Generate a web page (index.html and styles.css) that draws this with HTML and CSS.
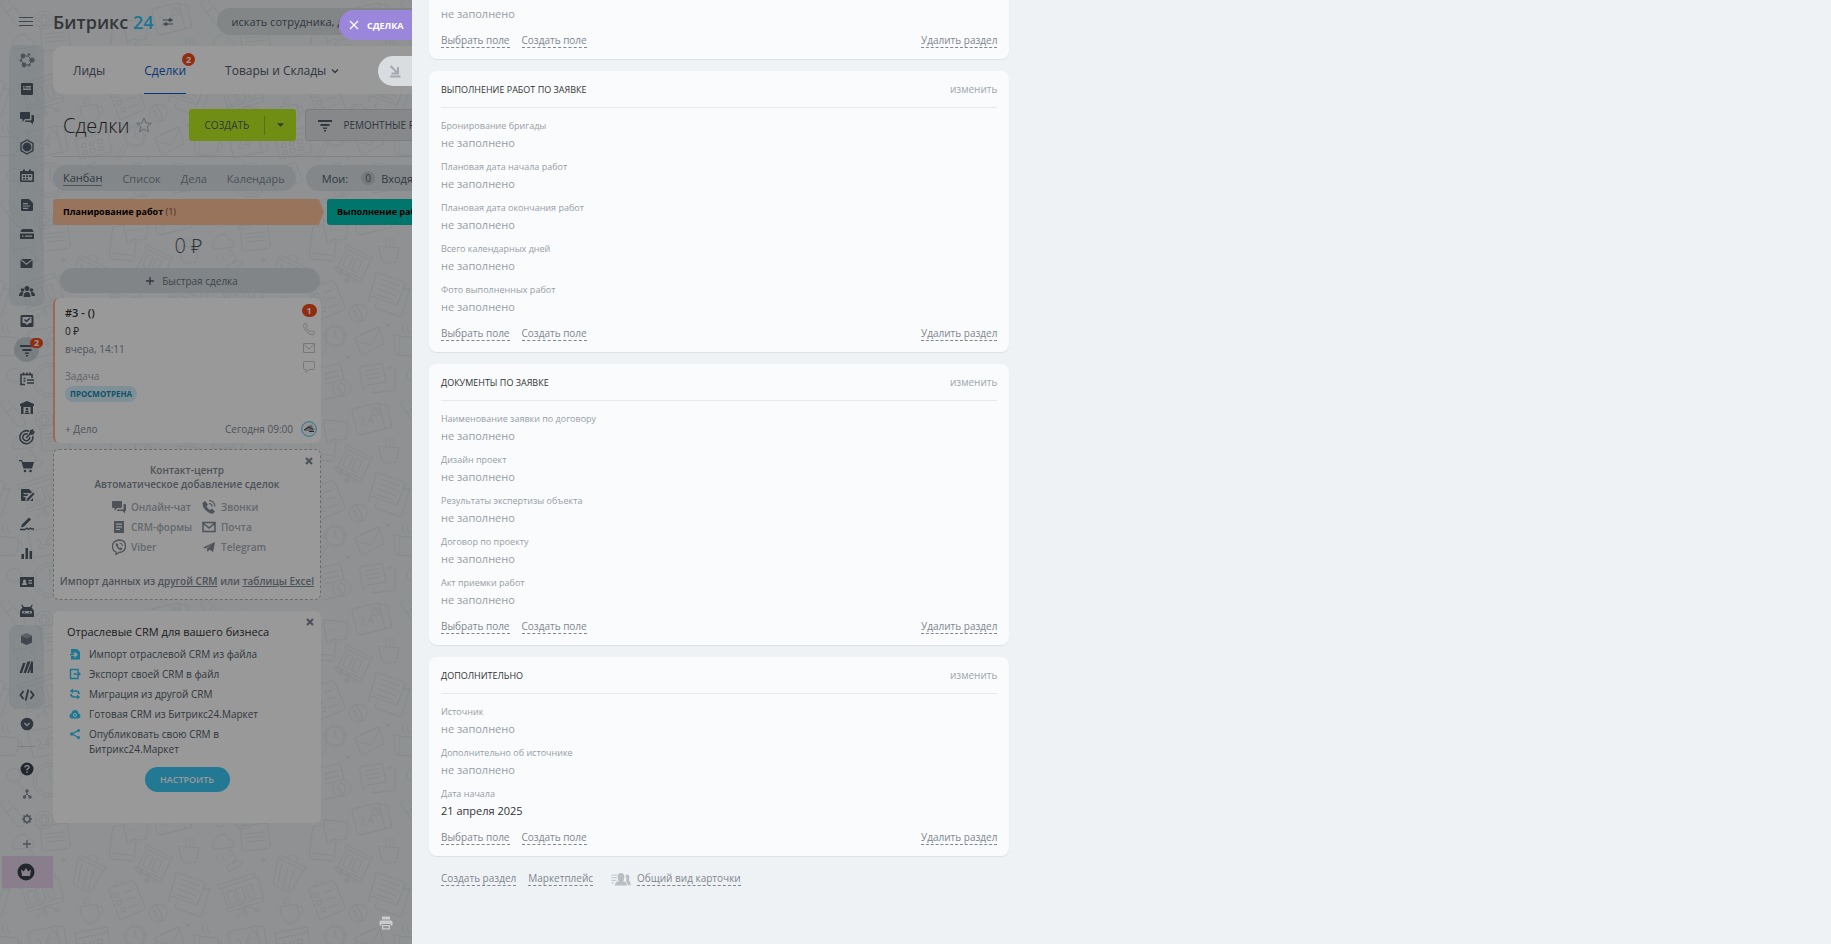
FILE: index.html
```html
<!DOCTYPE html>
<html lang="ru">
<head>
<meta charset="utf-8">
<title>Сделки</title>
<link rel="stylesheet" href="styles.css">
</head>
<body>
<svg class="defs" width="0" height="0" aria-hidden="true">
  <defs>
    <pattern id="doodle" width="200" height="200" patternUnits="userSpaceOnUse">
      <g fill="none" stroke="#e1e6e9" stroke-width="1" stroke-linejoin="round" stroke-linecap="round">
        <g id="cup"><path d="M179 46l20 2-3 14q-7 3-14-1zM199 51q5 0 4 4t-6 3M186 38q-2 2 0 4t0 3M190 38q-2 2 0 4t0 3M194 38q-2 2 0 4t0 3"/></g>
        <path d="M13 49q-1-12 9-15 5-1 7 5 6 2 5 8zM31 50l5 9-4 4M27 66l11-6 5 3-14 9zM16 56l3 5M21 54l3 5"/>
        <path d="M80 55l27 13-2 3-27-13zM78 60l-5 22q8 10 18 10l12-22M82 64l-4 19M88 67l-5 20M94 70l-6 20M88 57q4-5 9 0v3"/>
        <path d="M178 73l26 9q2 1 1 3l-8 20-26-9-3 6 3-10 5-18q0-2 2-1zM204 90l6-2-9 29-26-9 2-7M181 79l19 7M180 84l19 7M178 89l18 7M176 94l17 6"/>
        <path d="M-22 73l26 9q2 1 1 3l-8 20M4 90l6-2-9 29-26-9"/>
        <path d="M18 85l37-12 1 4-37 12zM22 89l6 19M58 77l5 20M26 109l37-12 1 4-36 11zM27 92l6-2 4 13-6 2zM36 89l6-2 4 13-6 2zM46 86l5-2 4 13-5 2zM46 106l-1 6M46 106l-6 9M46 106l9 3"/><circle cx="38" cy="116" r="2"/><circle cx="46" cy="114" r="2"/><circle cx="57" cy="110" r="2"/>
        <path d="M80 107l17-3 2 13q-6 8-12 6-6-4-7-16zM98 107q5-1 5 3t-4 4M83 98q-1 2 1 3t0 3M87 97q-1 2 1 3t0 3"/>
        <path d="M110 88l22-7q2 0 3 2l10 24q0 2-2 3l-20 9q-3 1-4-1l-10-27q-1-2 1-3zM115 86q0-6 6-4l3 2M114 94l4-1 1 4-4 1zM117 101l4-1 1 4-4 1zM121 108l4-1 1 4-4 1zM123 93l9-3M126 100l9-3M129 107l9-3"/>
        <circle cx="158" cy="113" r="9"/><path d="M154 106q2-2 4 1l4 9-1 5-4-4-4-9z"/>
        <path d="M147 45l26 13-2 3-26-13zM146 50l-9 18M170 62l-8 18M136 67l27 13-1 3-27-13zM148 54l5 3-5 12-5-3zM157 58l5 3-5 12-5-3zM149 75l-6-1M149 75l-1 6M149 75l5 5"/><circle cx="140" cy="73" r="2"/><circle cx="147" cy="81" r="2"/><circle cx="155" cy="81" r="2"/>
        <path d="M124 20l22 2q2 0 2 2l-2 15q-10 2-12 0l-6 4-2-5q-3-15-2-18zM123 25l-10 2-4 30q1 2 4 2l18 2q3 0 3-2l2-17M112 53l22 3M130 30h1M135 30h1M140 30h1"/>
        <path d="M152 9l27-6 6 26-27 6zM179 4l8 1 5 22-7 2"/><circle cx="176" cy="12" r="4"/><path d="M176 10v2h2M159 19q3-4 5 0l-3 7 5-1M172 24v-9l-4 7 6-1"/>
        <path d="M40 26l27-3 3 22q0 4-4 4l-23 2zM45 34l20-2M45 38l20-2M46 42l20-2"/><circle cx="44" cy="20" r="9"/><path d="M42 15h4v3h3v4h-3v3h-4v-3h-3v-4h3z"/>
        <circle cx="135" cy="136" r="11"/><circle cx="135" cy="136" r="9"/><path d="M135 130v6l4 3M125 144l-10 14M128 146l-9 13"/>
        <path d="M155 138l24-11 5 17-22 11zM159 142l12 3 8-14M160 135l15-7"/>
        <path d="M160 167l22-4 4 19-19 3-4 5-1-5zM188 168l7 0v22l-22 3 1-6M165 171l14-2M165 175l15-2M166 179l14-2"/>
        <path d="M120 168l20-5 4 17M124 174l14-3M124 179l14-3M125 184l10-2M124 200l20-5"/><circle cx="142" cy="188" r="9"/><path d="M141 182l5 5-2 1 1 5-4 1-1-5h-3z"/>
        <path d="M194 135l6 1v20l-4-2zM0 136l18 2q1 12-4 18l-14-1M18 142q6 0 4 5t-6 4M3 125q-2 3 0 5t0 4M8 125q-2 3 0 5t0 4"/>
        <path d="M28 132l28-6 6 26-28 6zM56 126l8 1 4 23-6 3M36 142q3-4 5 0l-3 7 5-1M48 147v-9l-4 7 6-1"/><circle cx="53" cy="135" r="4"/>
        <path d="M75 133l32-6 5 25-32 7zM76 139l32-7M82 144l4-1v4l-4 1zM90 142l4-1v4l-4 1zM98 140l4-1v4l-4 1zM83 151l4-1v4l-4 1zM91 149l4-1v4l-4 1zM99 147l4-1v4l-4 1z"/>
        <circle cx="50" cy="180" r="17"/><circle cx="50" cy="180" r="14"/><path d="M50 169v11l7 6"/>
        <path d="M3 0q-4 4 0 8l14 18q8 3 8-6L9 1Q6-3 3 0zM7 13l8-8"/><circle cx="14" cy="175" r="7"/><path d="M18 181l5 9"/>
        <path d="M73 170l22-8 8 19-22 8zM80 172l14-5M82 177l14-5M63 57v6M60 60h6M188 123v4M186 125h4M148 155v4M146 157h4"/>
      </g>
    </pattern>
    <symbol id="i-net" viewBox="0 0 16 16"><g fill="currentColor"><circle cx="4" cy="4" r="2.4"/><circle cx="13" cy="8" r="2.6"/><circle cx="5" cy="13" r="2.4"/><circle cx="10" cy="2.5" r="1.3"/><circle cx="1.8" cy="8.5" r="1.2"/><circle cx="10.3" cy="13.3" r="1.2"/></g><path d="M4 4h5l4 4-3 5H5L2 8z" fill="none" stroke="currentColor" stroke-width="1"/></symbol>
    <symbol id="i-feed" viewBox="0 0 16 16"><path fill="currentColor" fill-rule="evenodd" d="M3 2h10q1 0 1 1v10q0 1-1 1H3q-1 0-1-1V3q0-1 1-1zm1 3v1.500h1.500V5zm2.500 0v1.500H12V5zM4 7.500V9h8V7.500z"/></symbol>
    <symbol id="i-chat" viewBox="0 0 16 16"><path fill="currentColor" d="M2 2h8q1 0 1 1v5q0 1-1 1H6l-2.500 3V9H2Q1 9 1 8V3q0-1 1-1zm10.500 3H14q1 0 1 1v5q0 1-1 1v2.500L11.500 12H7q-1 0-1-1v-.5h5.500q1 0 1-1z"/></symbol>
    <symbol id="i-hex" viewBox="0 0 16 16"><path fill="none" stroke="currentColor" stroke-width="1.400" stroke-linejoin="round" d="M8 1l6 3.400v7.200L8 15l-6-3.400V4.400z"/><circle cx="8" cy="8" r="4.400" fill="currentColor"/></symbol>
    <symbol id="i-cal" viewBox="0 0 16 16"><path fill="currentColor" fill-rule="evenodd" d="M2 3h2V1.500h2V3h4V1.500h2V3h2q1 0 1 1v9q0 1-1 1H2q-1 0-1-1V4q0-1 1-1zm.7 3v6.500h10.600V6z"/><path fill="currentColor" d="M4 7.300h2V9H4zm3 0h2V9H7zm3 0h2V9h-2zM4 10h2v1.500H4zm3 0h2v1.500H7z"/></symbol>
    <symbol id="i-doc" viewBox="0 0 16 16"><path fill="currentColor" fill-rule="evenodd" d="M3 2h7l4 4v7q0 1-1 1H3q-1 0-1-1V3q0-1 1-1zm1 4v1.200h5V6zm0 2.400v1.200h7V8.400zm0 2.400V12h5v-1.200z"/></symbol>
    <symbol id="i-form" viewBox="0 0 16 16"><path fill="currentColor" fill-rule="evenodd" d="M3 2h10v12H3zm2 2.500v1.200h6V4.500zm0 2.700v1.200h6V7.200zm0 2.700v1.200h4V9.900z"/></symbol>
    <symbol id="i-disk" viewBox="0 0 16 16"><path fill="currentColor" fill-rule="evenodd" d="M4 3h8q2 0 2.500 3h-13Q2 3 4 3zM1 7.500h14v5q0 .5-.5.500h-13Q1 13 1 12.500zm2 2v1.300h1.500V9.500zm3 0v1.300h7V9.500z"/></symbol>
    <symbol id="i-mail" viewBox="0 0 16 16"><path fill="currentColor" d="M2 4h11l-5.500 4.500zM1.500 5l6 5 6-5v7q0 1-1 1h-10q-1 0-1-1z"/></symbol>
    <symbol id="i-group" viewBox="0 0 16 16"><g fill="currentColor"><circle cx="8" cy="4.500" r="2.500"/><circle cx="3.500" cy="6" r="1.800"/><circle cx="12.500" cy="6" r="1.800"/><path d="M4.500 13q0-5 3.500-5t3.500 5zM0 12q0-4 3-4 1 0 1.500.5-1 1-1.200 3.500zM16 12q0-4-3-4-1 0-1.500.5 1 1 1.200 3.500z"/></g></symbol>
    <symbol id="i-task" viewBox="0 0 16 16"><path fill="currentColor" fill-rule="evenodd" d="M3 2h10q1.500 0 1.500 1.500v9.500q0 1-1.500 1H3q-1.500 0-1.500-1V3.500Q1.500 2 3 2zm.5 2v6h2.500l1 1.500h2l1-1.500h2.500V4z"/><path d="M5.500 6.500l2 2 3.500-3.500" fill="none" stroke="currentColor" stroke-width="1.500"/></symbol>
    <symbol id="i-funnel" viewBox="0 0 16 16"><path fill="currentColor" d="M1 3h14v2H1zm2.500 4h9v2h-9zM5.500 10.500h5l-1 1.500h-3zM7 13h2v1.500H7z"/></symbol>
    <symbol id="i-booking" viewBox="0 0 16 16"><path fill="none" stroke="currentColor" stroke-width="1.500" d="M6 13.500H2V3.500h11V7M4.500 1.500v3M8 1.500v3M11 1.500v3M4.500 7.500h2M4.500 10h2M8 9h7M8 12h7"/></symbol>
    <symbol id="i-house" viewBox="0 0 16 16"><path fill="currentColor" fill-rule="evenodd" d="M8 1l7 3v2h-1v8H2V6H1V4zM4.500 7v7h1v-1h5v1h1V7z"/><circle cx="8" cy="9" r="1.300" fill="currentColor"/><path fill="currentColor" d="M6 12.500q0-2 2-2t2 2z"/></symbol>
    <symbol id="i-target" viewBox="0 0 16 16"><path fill="none" stroke="currentColor" stroke-width="1.500" d="M10 2.200A6.500 6.500 0 1 0 13.800 7M9 5.200A3.500 3.500 0 1 0 10.800 8M7 9l6-6M11 5l.5-3 2-1v1.700L15 3l-1.200 2z"/></symbol>
    <symbol id="i-cart" viewBox="0 0 16 16"><path fill="currentColor" d="M0 2h3l.8 2H15l-2 6.500H4.500L2.300 3.300H0z"/><circle cx="6" cy="13" r="1.300" fill="currentColor"/><circle cx="11.500" cy="13" r="1.300" fill="currentColor"/></symbol>
    <symbol id="i-docpen" viewBox="0 0 16 16"><path fill="currentColor" d="M3 2h7l3 3-2 2V6H4.500v1.200h5L8 9H4.500v1.200H7L6.500 12l-.3 2H3q-1 0-1-1V3q0-1 1-1zm11 3.500l1.500 1.500-6 6.500-2.200.7.6-2.200zM11 14l3-3v3z"/></symbol>
    <symbol id="i-sign" viewBox="0 0 16 16"><path fill="currentColor" d="M10 1.500L12 3.500 5 10.500l-3 1 1-3z"/><path d="M1 13.500h5l2-1.500 1.500 1.500 2-1.500 1 1H15" fill="none" stroke="currentColor" stroke-width="1.300"/></symbol>
    <symbol id="i-bars" viewBox="0 0 16 16"><path fill="currentColor" d="M2.500 9H5v5H2.500zm4-6H9v11H6.500zm4 3H13v8h-2.500z"/></symbol>
    <symbol id="i-card" viewBox="0 0 16 16"><path fill="currentColor" fill-rule="evenodd" d="M1 3h14v10H1zm8.500 3v1.200H13V6zm0 2.500v1.200H13V8.500zM3 11h5q0-2-1.500-2.500Q7 8 7 7 7 5.500 5.500 5.500T4 7q0 1 .5 1.500Q3 9 3 11z"/></symbol>
    <symbol id="i-robot" viewBox="0 0 16 16"><path fill="currentColor" fill-rule="evenodd" d="M3 1.500L5 4h6l2-2.500.8.5-1.300 2.500q2.500 2 2.500 5v4q0 .5-1 .5H2q-1 0-1-.5v-4q0-3 2.500-5L2.200 2zM4 8q-1 0-1 1.200T4 10.500h8q1 0 1-1.300T12 8z"/><circle cx="5.500" cy="9.300" r=".8" fill="currentColor"/><circle cx="10.500" cy="9.300" r=".8" fill="currentColor"/></symbol>
    <symbol id="i-box" viewBox="0 0 16 16"><path fill="currentColor" opacity=".5" d="M7.500 2L13 4.500v7L7.500 14 2 11.500v-7z"/><path fill="currentColor" opacity=".6" d="M2 5l5.500 2.500V14L2 11.500zM7.500 7.500L13 5v6.500L7.500 14z"/></symbol>
    <symbol id="i-slashes" viewBox="0 0 16 16"><path fill="currentColor" d="M4 4h2.500L3 14H.5zM8.500 2.500h3L7 14H4.500zM12.500 2L14 3v11h-2.500V9.500L10 14H8.200z"/></symbol>
    <symbol id="i-code" viewBox="0 0 16 16"><path fill="none" stroke="currentColor" stroke-width="1.800" d="M4.500 4L1.500 8l3 4M11.500 4l3 4-3 4M9.300 2.500l-2.600 11"/></symbol>
    <symbol id="i-down" viewBox="0 0 16 16"><circle cx="8" cy="8" r="6.300" fill="currentColor"/><path d="M5.300 7L8 9.500 10.700 7" fill="none" stroke="#d9dde0" stroke-width="1.500"/></symbol>
    <symbol id="i-help" viewBox="0 0 16 16"><circle cx="8" cy="8" r="6.500" fill="currentColor"/><path d="M6 6.500Q6 4.500 8 4.500t2 1.800Q10 7.500 8 8.500v.8M8 10.500V12" fill="none" stroke="#d9dde0" stroke-width="1.500"/></symbol>
    <symbol id="i-tree" viewBox="0 0 16 16"><path d="M8 5v3l-3 3M8 8l3 3" fill="none" stroke="currentColor"/><circle cx="8" cy="5" r="1.700" fill="currentColor"/><circle cx="5.500" cy="11" r="1.700" fill="currentColor"/><circle cx="11" cy="11" r="1.700" fill="currentColor"/></symbol>
    <symbol id="i-gear" viewBox="0 0 16 16"><circle cx="8" cy="8" r="3" fill="none" stroke="currentColor" stroke-width="1.600"/><path d="M8 3v2M8 11v2M3 8h2M11 8h2M4.500 4.500l1.300 1.300M10.200 10.200l1.300 1.300M4.500 11.500l1.300-1.300M10.200 5.800l1.300-1.300" stroke="currentColor" stroke-width="1.500"/></symbol>
    <symbol id="i-plus" viewBox="0 0 16 16"><path d="M8 4v8M4 8h8" stroke="currentColor" stroke-width="1.300"/></symbol>
    <symbol id="i-crown" viewBox="0 0 18 18"><circle cx="9" cy="9" r="8.500" fill="currentColor"/><path fill="#e3dbe8" d="M4 6.500l2.800 2L9 5l2.200 3.500 2.800-2-1 6.500H5z"/></symbol>
    <symbol id="i-x" viewBox="0 0 10 10"><path d="M2 2l6 6M8 2l-6 6" stroke="currentColor" stroke-width="2.200"/></symbol>
    <symbol id="i-phone" viewBox="0 0 14 14"><path fill="none" stroke="currentColor" d="M1.500 2.500l2-1.500 2 3-1.300 1.500q1 2.500 4 4.300L9.700 8.500l3 2-1.500 2.300q-3 .5-6.500-3T1.500 2.500z"/></symbol>
    <symbol id="i-env" viewBox="0 0 14 14"><path fill="none" stroke="currentColor" d="M1.500 2.500h11v9h-11zM1.500 3L7 8l5.500-5"/></symbol>
    <symbol id="i-envb" viewBox="0 0 16 16"><path fill="none" stroke="currentColor" stroke-width="1.500" d="M2 3.500h12v9H2zM2 4l6 5 6-5"/></symbol>
    <symbol id="i-bubble" viewBox="0 0 14 14"><path fill="none" stroke="currentColor" d="M2.500 1.500h9q1 0 1 1v6q0 1-1 1H7l-3 3v-3H2.500q-1 0-1-1v-6q0-1 1-1z"/></symbol>
    <symbol id="i-call" viewBox="0 0 16 16"><path fill="currentColor" d="M1.500 4L4 2l3 3.500-1.500 2q1 2 3.500 3.500l2-1.500 3 3-2 2.300q-3 .5-7-3.300T1.500 4z"/><path fill="none" stroke="currentColor" stroke-width="1.200" d="M8 1.500q5.500.5 6 6M8 4.500q2.800.3 3.200 3"/></symbol>
    <symbol id="i-viber" viewBox="0 0 16 16"><path fill="none" stroke="currentColor" stroke-width="1.300" d="M8 1q6.500 0 6.500 6T8 13.500L5 15.500V13Q1.500 12 1.500 7T8 1z"/><path fill="currentColor" d="M4.500 5l1.300-1L7.500 6l-.8 1q.8 1.500 2 2l1-.7 1.800 1.500-1 1.300Q6.500 11.500 4.500 5z"/><path d="M8.500 4q3 0 3 3" fill="none" stroke="currentColor"/></symbol>
    <symbol id="i-plane" viewBox="0 0 16 16"><path fill="currentColor" d="M2 8.500L14 3l-2 10-3.500-2.500L6.500 13 6 9.500 11.500 5 4.500 9.500z"/></symbol>
    <symbol id="i-import" viewBox="0 0 12 12"><path fill="currentColor" fill-rule="evenodd" d="M2 1h6l3 3v7.500H2V8h3.500v2L9 6.500 5.500 3.500V5.500H2z"/><path fill="currentColor" d="M1 5.800h4v1.500H1z"/></symbol>
    <symbol id="i-export" viewBox="0 0 12 12"><path fill="none" stroke="currentColor" stroke-width="1.500" d="M9 3.500v-2H1.500v9H9V8.500M4.500 6H10M8.500 3.800L11 6 8.500 8.200"/></symbol>
    <symbol id="i-sync" viewBox="0 0 12 12"><path fill="none" stroke="currentColor" stroke-width="1.700" d="M3 3h4q3 0 3 3M9 9H5Q2 9 2 6"/><path fill="currentColor" d="M4 .5v5L.8 3zM8 11.500v-5L11.200 9z"/></symbol>
    <symbol id="i-cloud" viewBox="0 0 12 12"><path fill="currentColor" fill-rule="evenodd" d="M3 10.500Q.5 10.500.5 8T2.500 5.500Q3 2 6 2t3.500 3.500q2 .3 2 2.500T9 10.500zM6 5a2 2 0 1 0 .01 0z"/><circle cx="6" cy="7" r="1" fill="currentColor"/></symbol>
    <symbol id="i-share" viewBox="0 0 12 12"><path d="M9.500 2.500L3 6l6.500 3.500" fill="none" stroke="currentColor" stroke-width="1.400"/><g fill="currentColor"><circle cx="9.500" cy="2.500" r="1.600"/><circle cx="2.800" cy="6" r="1.800"/><circle cx="9.500" cy="9.500" r="1.600"/></g></symbol>
    <symbol id="i-print" viewBox="0 0 14 14"><path fill="currentColor" fill-rule="evenodd" d="M3 .5h8V3.500H3zM2 4.500h10q1.500 0 1.500 1.500v3.500h-2V8h-9v1.500H.5V6Q.5 4.500 2 4.500zM3 9h8v4.500H3zm1.300 1.200v2h5.400v-2z"/></symbol>
    <symbol id="i-people" viewBox="0 0 22 16"><path d="M0 3.500h7M0 6.500h6M0 9.500h6M0 12.500h3" stroke="currentColor"/><path fill="currentColor" d="M4 15.500q0-4 4.500-5Q7 8 7.200 5 7.500 1 11 1t3.800 4q.2 3-1.300 5.500 4.500 1 4.500 5zM16 4q1.500-2 3.500-.5t.5 6q2 1 2 5.500h-3q-.5-3-2.500-4.500Q18 8 16 4z"/></symbol>
  </defs>
</svg>

<div class="layout">
  <div class="page">
    <svg class="wallpaper" aria-hidden="true"><rect width="100%" height="100%" fill="url(#doodle)"/></svg>
    <nav class="side">
      <button class="burger" aria-label="Меню"><i></i><i></i><i></i></button>
      <div class="side-group">
        <a href="#"><svg class="ic faded"><use href="#i-net"/></svg></a>
        <a href="#"><svg class="ic"><use href="#i-feed"/></svg></a>
        <a href="#"><svg class="ic"><use href="#i-chat"/></svg></a>
        <a href="#"><svg class="ic"><use href="#i-hex"/></svg></a>
        <a href="#"><svg class="ic"><use href="#i-cal"/></svg></a>
        <a href="#"><svg class="ic"><use href="#i-doc"/></svg></a>
        <a href="#"><svg class="ic"><use href="#i-disk"/></svg></a>
        <a href="#"><svg class="ic"><use href="#i-mail"/></svg></a>
        <a href="#"><svg class="ic"><use href="#i-group"/></svg></a>
      </div>
      <div class="side-list">
        <a href="#"><svg class="ic"><use href="#i-task"/></svg></a>
        <a href="#" class="current"><svg class="ic"><use href="#i-funnel"/></svg><span class="side-badge">2</span></a>
        <a href="#"><svg class="ic"><use href="#i-booking"/></svg></a>
        <a href="#"><svg class="ic"><use href="#i-house"/></svg></a>
        <a href="#"><svg class="ic"><use href="#i-target"/></svg></a>
        <a href="#"><svg class="ic"><use href="#i-cart"/></svg></a>
        <a href="#"><svg class="ic"><use href="#i-docpen"/></svg></a>
        <a href="#"><svg class="ic"><use href="#i-sign"/></svg></a>
        <a href="#"><svg class="ic"><use href="#i-bars"/></svg></a>
        <a href="#"><svg class="ic"><use href="#i-card"/></svg></a>
        <a href="#"><svg class="ic"><use href="#i-robot"/></svg></a>
      </div>
      <div class="side-group lower">
        <a href="#"><svg class="ic"><use href="#i-box"/></svg></a>
        <a href="#"><svg class="ic"><use href="#i-slashes"/></svg></a>
        <a href="#"><svg class="ic"><use href="#i-code"/></svg></a>
      </div>
      <div class="side-list"><a href="#"><svg class="ic"><use href="#i-down"/></svg></a></div>
      <div class="side-tools">
        <a href="#"><svg class="ic dark"><use href="#i-help"/></svg></a>
        <a href="#"><svg class="ic faded"><use href="#i-tree"/></svg></a>
        <a href="#"><svg class="ic faded"><use href="#i-gear"/></svg></a>
        <a href="#"><svg class="ic faded"><use href="#i-plus"/></svg></a>
      </div>
      <a href="#" class="crown"><svg class="ic-crown"><use href="#i-crown"/></svg></a>
    </nav>

    <div class="main">
      <header class="top">
        <a class="logo" href="#">Битрикс <b>24</b></a>
        <svg class="sliders" viewBox="0 0 10 10"><path d="M0 3h10M0 7h10" stroke="currentColor"/><circle cx="7" cy="3" r="1.700" fill="currentColor"/><circle cx="3" cy="7" r="1.700" fill="currentColor"/></svg>
        <input class="search" type="text" aria-label="Поиск" placeholder="искать сотрудника, документ, прочее...">
      </header>
      <nav class="menu">
        <a href="#">Лиды</a>
        <a href="#" class="active">Сделки<span class="badge">2</span></a>
        <a href="#">Товары и Склады <svg class="chev" viewBox="0 0 8 8"><path d="M1 2.500l3 3 3-3" fill="none" stroke="currentColor" stroke-width="1.300"/></svg></a>
      </nav>
      <div class="toolbar">
        <h1>Сделки</h1>
        <svg class="star" viewBox="0 0 16 16"><path fill="none" stroke="currentColor" d="M8 1l2 5 5.300.3-4.100 3.400 1.400 5.200L8 12l-4.600 2.900 1.400-5.200L.7 6.300 6 6z"/></svg>
        <div class="create"><button>СОЗДАТЬ</button><button class="more" aria-label="Ещё"><svg viewBox="0 0 8 4"><path fill="currentColor" d="M0 0h8L4 4z"/></svg></button></div>
        <button class="funnel"><svg class="ic"><use href="#i-funnel"/></svg>РЕМОНТНЫЕ РАБОТЫ</button>
      </div>
      <div class="views">
        <div class="pill"><a href="#" class="on">Канбан</a><a href="#">Список</a><a href="#">Дела</a><a href="#">Календарь</a></div>
        <div class="pill mine"><span>Мои:</span><i class="zero">0</i><span>Входящие</span></div>
      </div>
      <div class="kanban">
        <section class="col">
          <div class="stage orange"><b>Планирование работ</b> (1)</div>
          <div class="sum">0 ₽</div>
          <button class="quick"><svg class="ic"><use href="#i-plus"/></svg>Быстрая сделка</button>
          <article class="deal">
            <div class="deal-body">
              <div>
                <a class="deal-title" href="#">#3 - ()</a>
                <div class="deal-sum">0 ₽</div>
                <div class="deal-date">вчера, 14:11</div>
                <div class="deal-task">Задача</div>
                <span class="seen">ПРОСМОТРЕНА</span>
              </div>
              <div class="deal-icons">
                <span class="count">1</span>
                <svg><use href="#i-phone"/></svg><svg><use href="#i-env"/></svg><svg><use href="#i-bubble"/></svg>
              </div>
            </div>
            <div class="deal-foot"><a href="#">+ Дело</a><span>Сегодня 09:00</span>
              <svg class="ava" viewBox="0 0 16 16"><circle cx="8" cy="8" r="7.400" fill="#f4f6f7" stroke="#4fc3e8"/><path d="M3 9q4-5 7-5 3 1 1 3l3 1-2 2H4z" fill="#a5adb3"/><path d="M3 9l5-3 4 2M8 10.500h5" stroke="#444" fill="none"/></svg>
            </div>
          </article>
          <article class="contact">
            <button class="close" aria-label="Закрыть"><svg><use href="#i-x"/></svg></button>
            <p>Контакт-центр<br>Автоматическое добавление сделок</p>
            <div class="channels">
              <span><svg><use href="#i-chat"/></svg>Онлайн-чат</span><span><svg><use href="#i-call"/></svg>Звонки</span>
              <span><svg><use href="#i-form"/></svg>CRM-формы</span><span><svg><use href="#i-envb"/></svg>Почта</span>
              <span><svg><use href="#i-viber"/></svg>Viber</span><span><svg><use href="#i-plane"/></svg>Telegram</span>
            </div>
            <p>Импорт данных из <a href="#">другой CRM</a> или <a href="#">таблицы Excel</a></p>
          </article>
          <article class="industry">
            <button class="close" aria-label="Закрыть"><svg><use href="#i-x"/></svg></button>
            <h2>Отраслевые CRM для вашего бизнеса</h2>
            <ul>
              <li><svg><use href="#i-import"/></svg>Импорт отраслевой CRM из файла</li>
              <li><svg><use href="#i-export"/></svg>Экспорт своей CRM в файл</li>
              <li><svg><use href="#i-sync"/></svg>Миграция из другой CRM</li>
              <li><svg><use href="#i-cloud"/></svg>Готовая CRM из Битрикс24.Маркет</li>
              <li><svg><use href="#i-share"/></svg>Опубликовать свою CRM в Битрикс24.Маркет</li>
            </ul>
            <button class="setup">НАСТРОИТЬ</button>
          </article>
        </section>
        <section class="col"><div class="stage teal"><b>Выполнение работ</b></div></section>
      </div>
    </div>
    <div class="shade"></div>
    <div class="labels">
      <button class="label-deal"><svg viewBox="0 0 10 10"><path d="M1 1l8 8M9 1l-8 8" stroke="currentColor" stroke-width="1.300"/></svg>СДЕЛКА</button>
      <button class="label-min" aria-label="Свернуть"><svg viewBox="0 0 12 14"><path d="M1.500 2l7 7M9 3v6.500H2.500M1 12.500h10.500" fill="none" stroke="currentColor" stroke-width="2"/></svg></button>
    </div>
    <button class="print" aria-label="Печать"><svg><use href="#i-print"/></svg></button>
  </div>

  <main class="panel">
    <div class="sections">
      <section class="card clipped">
        <dl><dt>&nbsp;</dt><dd>не заполнено</dd></dl>
        <div class="links"><a href="#">Выбрать поле</a><a href="#">Создать поле</a><a href="#" class="del">Удалить раздел</a></div>
      </section>
      <section class="card">
        <header><h3>ВЫПОЛНЕНИЕ РАБОТ ПО ЗАЯВКЕ</h3><a href="#">изменить</a></header>
        <dl>
          <dt>Бронирование бригады</dt><dd>не заполнено</dd>
          <dt>Плановая дата начала работ</dt><dd>не заполнено</dd>
          <dt>Плановая дата окончания работ</dt><dd>не заполнено</dd>
          <dt>Всего календарных дней</dt><dd>не заполнено</dd>
          <dt>Фото выполненных работ</dt><dd>не заполнено</dd>
        </dl>
        <div class="links"><a href="#">Выбрать поле</a><a href="#">Создать поле</a><a href="#" class="del">Удалить раздел</a></div>
      </section>
      <section class="card">
        <header><h3>ДОКУМЕНТЫ ПО ЗАЯВКЕ</h3><a href="#">изменить</a></header>
        <dl>
          <dt>Наименование заявки по договору</dt><dd>не заполнено</dd>
          <dt>Дизайн проект</dt><dd>не заполнено</dd>
          <dt>Результаты экспертизы объекта</dt><dd>не заполнено</dd>
          <dt>Договор по проекту</dt><dd>не заполнено</dd>
          <dt>Акт приемки работ</dt><dd>не заполнено</dd>
        </dl>
        <div class="links"><a href="#">Выбрать поле</a><a href="#">Создать поле</a><a href="#" class="del">Удалить раздел</a></div>
      </section>
      <section class="card">
        <header><h3>ДОПОЛНИТЕЛЬНО</h3><a href="#">изменить</a></header>
        <dl>
          <dt>Источник</dt><dd>не заполнено</dd>
          <dt>Дополнительно об источнике</dt><dd>не заполнено</dd>
          <dt>Дата начала</dt><dd class="filled">21 апреля 2025</dd>
        </dl>
        <div class="links"><a href="#">Выбрать поле</a><a href="#">Создать поле</a><a href="#" class="del">Удалить раздел</a></div>
      </section>
      <div class="links foot"><a href="#">Создать раздел</a><a href="#">Маркетплейс</a><svg><use href="#i-people"/></svg><a href="#">Общий вид карточки</a></div>
    </div>
  </main>
</div>
</body>
</html>
```

FILE: styles.css
```css
* { box-sizing: border-box; }
body { margin: 0; font-family: "Open Sans", "Noto Sans", sans-serif; font-size: 13px; color: #333; }
a { color: inherit; text-decoration: none; }
button, input { font: inherit; color: inherit; border: 0; padding: 0; background: none; }
h1, h2, h3, p, ul, dl, dd { margin: 0; padding: 0; font-weight: 400; }
.defs { position: absolute; }
.layout { display: flex; height: 100vh; overflow: hidden; }

/* dimmed page behind the slider */
.page { position: relative; width: 22.5%; flex: none; display: flex; overflow: hidden; background: #eef2f4; white-space: nowrap; }
.wallpaper { position: absolute; inset: 0; width: 100%; height: 100%; }
.shade { position: absolute; inset: 0; background: rgba(0, 0, 0, .4); }
.side, .main { position: relative; }

.side { width: 53px; flex: none; display: flex; flex-direction: column; color: #525c69; }
.ic { width: 16px; height: 16px; color: #525c69; }
.ic.faded { color: #828b95; }
.ic.dark { color: #3a424d; }
.burger { height: 45px; padding: 17px 19px 0; display: flex; flex-direction: column; gap: 3px; }
.burger i { width: 14px; height: 1px; background: #6a737f; }
.side-group { margin: 0 9px; border-radius: 8px; background: rgba(170, 190, 196, .22); }
.side-group a, .side-list a { height: 29px; display: flex; align-items: center; justify-content: center; position: relative; }
.side-group.lower a { height: 28px; }
.side-list { margin: 0 9px; }
.current::before { content: ""; position: absolute; width: 25px; height: 25px; border-radius: 50%; background: rgba(120, 135, 150, .3); }
.current .ic { position: relative; }
.side-badge { position: absolute; left: 21px; top: 3px; height: 10px; padding: 0 4px; border-radius: 5px; background: #f54819; color: #fff; font-size: 9px; font-weight: 700; line-height: 10px; }
.side-tools { border-top: 1px solid #cfd5d9; margin: 8px 18px 0; padding-top: 9px; display: flex; flex-direction: column; align-items: center; }
.side-tools a { height: 25px; display: flex; align-items: center; }
.crown { margin-left: 2px; padding-right: 4px; height: 32px; display: flex; align-items: center; justify-content: center; background: #e6d3ea; }
.ic-crown { width: 18px; height: 18px; color: #3a424d; }

.main { flex: 1; min-width: 0; }
.top { height: 46px; display: flex; align-items: center; padding-bottom: 3px; }
.logo { font-size: 18px; font-weight: 600; color: #575b5f; }
.logo b { font-weight: 600; color: #2fc6f6; }
.sliders { width: 10px; height: 10px; margin: 0 44px 0 9px; flex: none; color: #6a737f; }
.search { flex: none; width: 420px; height: 27px; border-radius: 14px; padding: 0 15px; background: #dbdfe2; font-size: 11px; }
.search::placeholder { color: #525c69; opacity: 1; }
.menu { height: 48px; width: 1400px; border-radius: 10px; background: #fff; display: flex; align-items: center; gap: 39px; padding-left: 20px; font-size: 12px; color: #525c69; }
.menu a { position: relative; height: 48px; line-height: 50px; }
.menu .active { color: #0b5cc9; border-bottom: 1px solid #0b5cc9; }
.badge { position: absolute; right: -9px; top: 7px; width: 13px; height: 13px; border-radius: 50%; background: #f54819; color: #fff; font-size: 9px; font-weight: 700; line-height: 13px; text-align: center; }
.chev { width: 8px; height: 8px; margin-left: 2px; }
.toolbar { height: 63px; width: 1400px; border-bottom: 1px solid #d8dde0; display: flex; align-items: center; padding-left: 10px; }
.toolbar h1 { font-size: 20px; font-weight: 300; color: #333; }
.star { width: 16px; height: 16px; margin: 0 37px 0 7px; color: #a8afb6; }
.create { width: 107px; height: 32px; border-radius: 3px; background: #bbed21; color: #525c69; display: flex; align-items: center; font-size: 10px; margin-right: 9px; }
.create button { flex: 1; height: 19px; }
.create .more { flex: 0 0 32px; border-left: 1px solid #93bb1a; line-height: 0; }
.more svg { width: 7px; height: 4px; }
.funnel { height: 32px; width: 260px; border: 1px solid #cdd2d5; border-radius: 3px; background: #dfe3e6; display: flex; align-items: center; gap: 10px; padding-left: 11px; font-size: 10px; color: #525c69; }
.views { display: flex; gap: 10px; padding: 8px 0; }
.pill { height: 26px; border-radius: 13px; background: #dbe2e6; display: flex; align-items: center; gap: 20px; padding: 0 11px 0 10px; font-size: 11px; color: #7e868f; }
.pill .on { color: #525c69; border-bottom: 1px solid #7e868f; line-height: 15px; }
.mine { width: 400px; gap: 6px; padding-left: 16px; color: #525c69; }
.zero { width: 14px; height: 14px; margin-left: 7px; border-radius: 50%; background: #c6ccd1; font-size: 10px; font-style: normal; text-align: center; line-height: 14px; }

.kanban { display: flex; gap: 3px; }
.col { width: 271px; flex: none; }
.stage { height: 26px; line-height: 26px; padding-left: 10px; font-size: 9px; color: #7a4f35; border-radius: 3px 0 0 3px; clip-path: polygon(0 0, 98% 0, 100% 50%, 98% 100%, 0 100%); }
.stage b { font-weight: 700; color: #000; }
.orange { background: #ffc19b; }
.teal { background: #00c4b5; }
.sum { height: 43px; line-height: 41px; font-size: 20px; font-weight: 300; text-align: center; color: #525c69; }
.quick { width: 260px; height: 25px; margin: 0 0 5px 7px; border-radius: 13px; background: #d7dee2; display: flex; align-items: center; justify-content: center; gap: 4px; font-size: 10px; color: #6a737f; }
.deal, .contact, .industry { width: 268px; border-radius: 6px; background: #fff; position: relative; }
.deal { height: 145px; margin-bottom: 6px; border-left: 2px solid #ffb08a; padding: 6px 4px 0 10px; display: flex; flex-direction: column; font-size: 11px; }
.deal-body { display: flex; justify-content: space-between; line-height: 18px; }
.deal-title { font-weight: 600; }
.deal-sum { color: #333; font-size: 10px; }
.deal-date { font-size: 10px; color: #828b95; }
.deal-task { font-size: 10px; margin-top: 10px; line-height: 16px; color: #a0a7ae; }
.seen { display: block; width: 72px; height: 16px; border-radius: 8px; margin-top: 2px; background: #d3f1f8; color: #2388b3; font-size: 8px; font-weight: 700; line-height: 15px; text-align: center; }
.deal-icons { width: 16px; display: flex; flex-direction: column; align-items: center; gap: 5px; color: #c4c9ce; }
.deal-icons svg { width: 14px; height: 14px; }
.count { width: 15px; height: 13px; border-radius: 7px; background: #f54819; color: #fff; font-size: 9px; font-weight: 700; line-height: 13px; text-align: center; }
.deal-foot { margin: auto 0 6px; display: flex; align-items: center; font-size: 10px; color: #828b95; }
.deal-foot span { margin-left: auto; }
.ava { width: 16px; height: 16px; margin-left: 8px; }
.contact { height: 151px; margin-bottom: 11px; border: 1px dashed #aeb4ba; padding: 13px 0 0; font-size: 10px; font-weight: 600; color: #828b95; }
.contact p { text-align: center; line-height: 14px; font-weight: 600; }
.contact p a { text-decoration: underline; }
.close { position: absolute; right: 6px; top: 6px; width: 10px; height: 10px; line-height: 0; color: #828b95; }
.close svg { width: 10px; height: 10px; }
.channels { display: grid; grid-template-columns: 90px auto; grid-auto-rows: 20px; margin: 6px 0 17px 57px; color: #a8aeb5; }
.channels span { display: flex; align-items: center; gap: 4px; }
.channels svg { width: 16px; height: 16px; color: #828b95; }
.industry { height: 212px; padding: 11px 14px 0; font-size: 10px; font-weight: 600; color: #525c69; }
.industry h2 { font-size: 11px; font-weight: 500; line-height: 20px; color: #333; }
.industry ul { list-style: none; margin: 3px 0 7px; }
.industry li { display: flex; white-space: normal; font-weight: 500; padding: 2px 40px 3px 0; line-height: 15px; }
.industry li svg { width: 12px; height: 12px; margin: 1px 8px 0 2px; flex: none; color: #2fc6f6; }
.setup { display: block; margin: 0 auto; width: 85px; height: 25px; border-radius: 13px; background: #3bc8f5; color: #fff; font-size: 9px; font-weight: 600; }

.labels { position: absolute; right: 0; top: 10px; display: flex; flex-direction: column; align-items: flex-end; gap: 16px; }
.label-deal { width: 73px; height: 30px; border-radius: 15px 0 0 15px; background: #9a86db; color: #fff; font-size: 9px; font-weight: 700; display: flex; align-items: center; gap: 8px; padding-left: 10px; }
.label-deal svg { width: 10px; height: 10px; }
.label-min { width: 34px; height: 30px; border-radius: 15px 0 0 15px; background: #dadde0; color: #a3a9b0; padding-left: 11px; text-align: left; line-height: 0; }
.label-min svg { width: 12px; height: 14px; }
.print { position: absolute; right: 19px; bottom: 14px; color: #c9cbcd; line-height: 0; }
.print svg { width: 14px; height: 14px; }

/* slider panel */
.panel { flex: 1; min-width: 0; background: #eef2f5; padding-left: 17px; }
.sections { width: 41.4%; display: flex; flex-direction: column; gap: 12px; }
.card { background: #f9fbfd; border-radius: 8px; padding: 0 12px 9px; box-shadow: 0 1px 1px rgba(0, 0, 0, .07); }
.clipped { margin-top: -21px; }
.card header { height: 37px; display: flex; align-items: center; justify-content: space-between; border-bottom: 1px solid #e6e9ec; }
.card h3 { font-size: 9px; color: #333; }
.card header a { font-size: 10px; color: #a0a5ab; }
.card dl { padding-top: 10px; }
.card dt { font-size: 9px; line-height: 16px; color: #989da4; }
.card dd { font-size: 11px; line-height: 17px; padding-bottom: 8px; color: #989da4; }
.card .filled { color: #333; }
.links { display: flex; align-items: center; gap: 12px; height: 19px; margin-top: 1px; font-size: 10px; color: #80868e; }
.links a { line-height: 14px; border-bottom: 1px dashed #80868e; }
.del { margin-left: auto; }
.foot { padding-left: 12px; }
.foot svg { width: 22px; height: 14px; margin: 0 -7px 0 5px; color: #b9bec3; }
```
